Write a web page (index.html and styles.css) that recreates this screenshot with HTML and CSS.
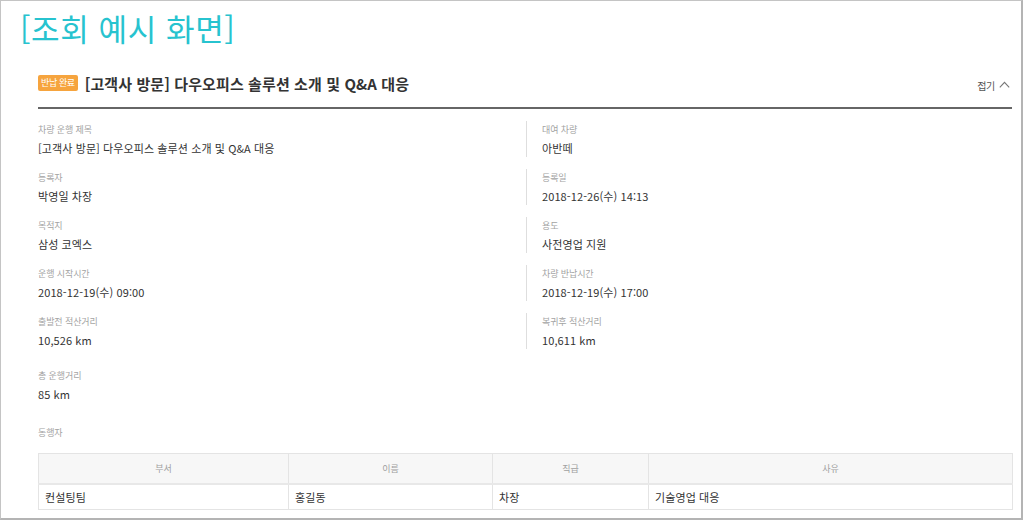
FILE: index.html
```html
<!DOCTYPE html>
<html lang="ko">
<head>
<meta charset="utf-8">
<title>조회 예시 화면</title>
<link rel="stylesheet" href="styles.css">
</head>
<body>
<div class="frame">
  <h1 class="page-title">[조회 예시 화면]</h1>
  <section class="card">
    <header class="card-head">
      <div class="head-left">
        <span class="badge">반납 완료</span>
        <h2 class="card-title">[고객사 방문] 다우오피스 솔루션 소개 및 Q&amp;A 대응</h2>
      </div>
      <button class="fold">접기
        <svg class="chev" width="11" height="7" viewBox="0 0 11 7"><path d="M0.8 6.3 L5.5 1.3 L10.2 6.3" fill="none" stroke="#777" stroke-width="1.1"/></svg>
      </button>
    </header>

    <div class="fields">
      <div class="field"><div class="label">차량 운행 제목</div><div class="value">[고객사 방문] 다우오피스 솔루션 소개 및 Q&amp;A 대응</div></div>
      <div class="field right"><div class="label">대여 차량</div><div class="value">아반떼</div></div>
      <div class="field"><div class="label">등록자</div><div class="value">박영일 차장</div></div>
      <div class="field right"><div class="label">등록일</div><div class="value">2018-12-26(수) 14:13</div></div>
      <div class="field"><div class="label">목적지</div><div class="value">삼성 코엑스</div></div>
      <div class="field right"><div class="label">용도</div><div class="value">사전영업 지원</div></div>
      <div class="field"><div class="label">운행 시작시간</div><div class="value">2018-12-19(수) 09:00</div></div>
      <div class="field right"><div class="label">차량 반납시간</div><div class="value">2018-12-19(수) 17:00</div></div>
      <div class="field"><div class="label">출발전 적산거리</div><div class="value">10,526 km</div></div>
      <div class="field right"><div class="label">복귀후 적산거리</div><div class="value">10,611 km</div></div>
    </div>

    <div class="field total"><div class="label">총 운행거리</div><div class="value">85 km</div></div>

    <div class="label companion">동행자</div>
    <table class="people">
      <colgroup><col class="c1"><col class="c2"><col class="c3"><col class="c4"></colgroup>
      <thead><tr><th>부서</th><th>이름</th><th>직급</th><th>사유</th></tr></thead>
      <tbody><tr><td>컨설팅팀</td><td>홍길동</td><td>차장</td><td>기술영업 대응</td></tr></tbody>
    </table>
  </section>
</div>
</body>
</html>
```

FILE: styles.css
```css
* { box-sizing: border-box; }
html, body { margin: 0; padding: 0; background: #fff; }
body {
  font-family: "Noto Sans CJK KR", "Noto Sans", sans-serif;
  color: #333;
}
.frame {
  width: 1023px;
  height: 520px;
  overflow: hidden;
  border-top: 1px solid #c4c4c4;
  border-left: 1px solid #c4c4c4;
  border-right: 2px solid #b4b4b4;
  border-bottom: 2px solid #b4b4b4;
  padding: 10px 9px 0 19px;
}
.page-title {
  margin: 0;
  font-size: 31px;
  font-weight: 400;
  line-height: 34px;
  color: #27c3cf;
  letter-spacing: 0.6px;
}
.card {
  margin: 29px 0 0 18px;
}
.card-head {
  display: flex;
  align-items: center;
  justify-content: space-between;
  padding-bottom: 13px;
  border-bottom: 2px solid #666;
  box-sizing: content-box;
  height: 20px;
}
.head-left { display: flex; align-items: center; gap: 7px; }
.badge {
  display: inline-block;
  background: #f6a43e;
  color: #fff;
  font-size: 9px;
  line-height: 16px;
  height: 16px;
  padding: 0 3px;
  border-radius: 2px;
  letter-spacing: -0.4px;
  margin-top: -2px;
}
.card-title {
  margin: 0;
  font-size: 15px;
  font-weight: 700;
  line-height: 20px;
  letter-spacing: 0.1px;
  color: #333;
  margin-top: -1px;
}
.fold {
  border: 0;
  background: none;
  padding: 0;
  margin-right: 2px;
  margin-top: 2px;
  font-family: inherit;
  font-size: 10px;
  color: #555;
  display: flex;
  align-items: center;
  gap: 4px;
  letter-spacing: -0.3px;
}
.chev { display: block; margin-top: -1px; }
.fields {
  display: grid;
  grid-template-columns: 488px 1fr;
  row-gap: 12px;
  margin-top: 12px;
}
.field { height: 36px; }
.field.right {
  border-left: 1px solid #dedede;
  padding-left: 15px;
}
.label {
  font-size: 9px;
  line-height: 18px;
  color: #a3a3a3;
  letter-spacing: -0.1px;
}
.value {
  font-size: 11px;
  line-height: 18px;
  color: #333;
  letter-spacing: 0.1px;
}
.total { margin-top: 18px; }
.companion { margin-top: 21px; }
.people {
  margin-top: 11px;
  width: 974px;
  border-collapse: collapse;
  table-layout: fixed;
}
.c1 { width: 250px; }
.c2 { width: 204px; }
.c3 { width: 156px; }
.c4 { width: 364px; }
.people th, .people td {
  border: 1px solid #e4e4e4;
}
.people th {
  height: 30px;
  background: #f7f7f7;
  font-size: 9px;
  font-weight: 400;
  color: #a0a0a0;
  text-align: center;
  padding: 0;
  border-bottom: 2px solid #e8e8e8;
}
.people td {
  height: 26px;
  font-size: 11px;
  color: #333;
  padding: 0 6px;
  text-align: left;
  letter-spacing: 0.1px;
}
```
